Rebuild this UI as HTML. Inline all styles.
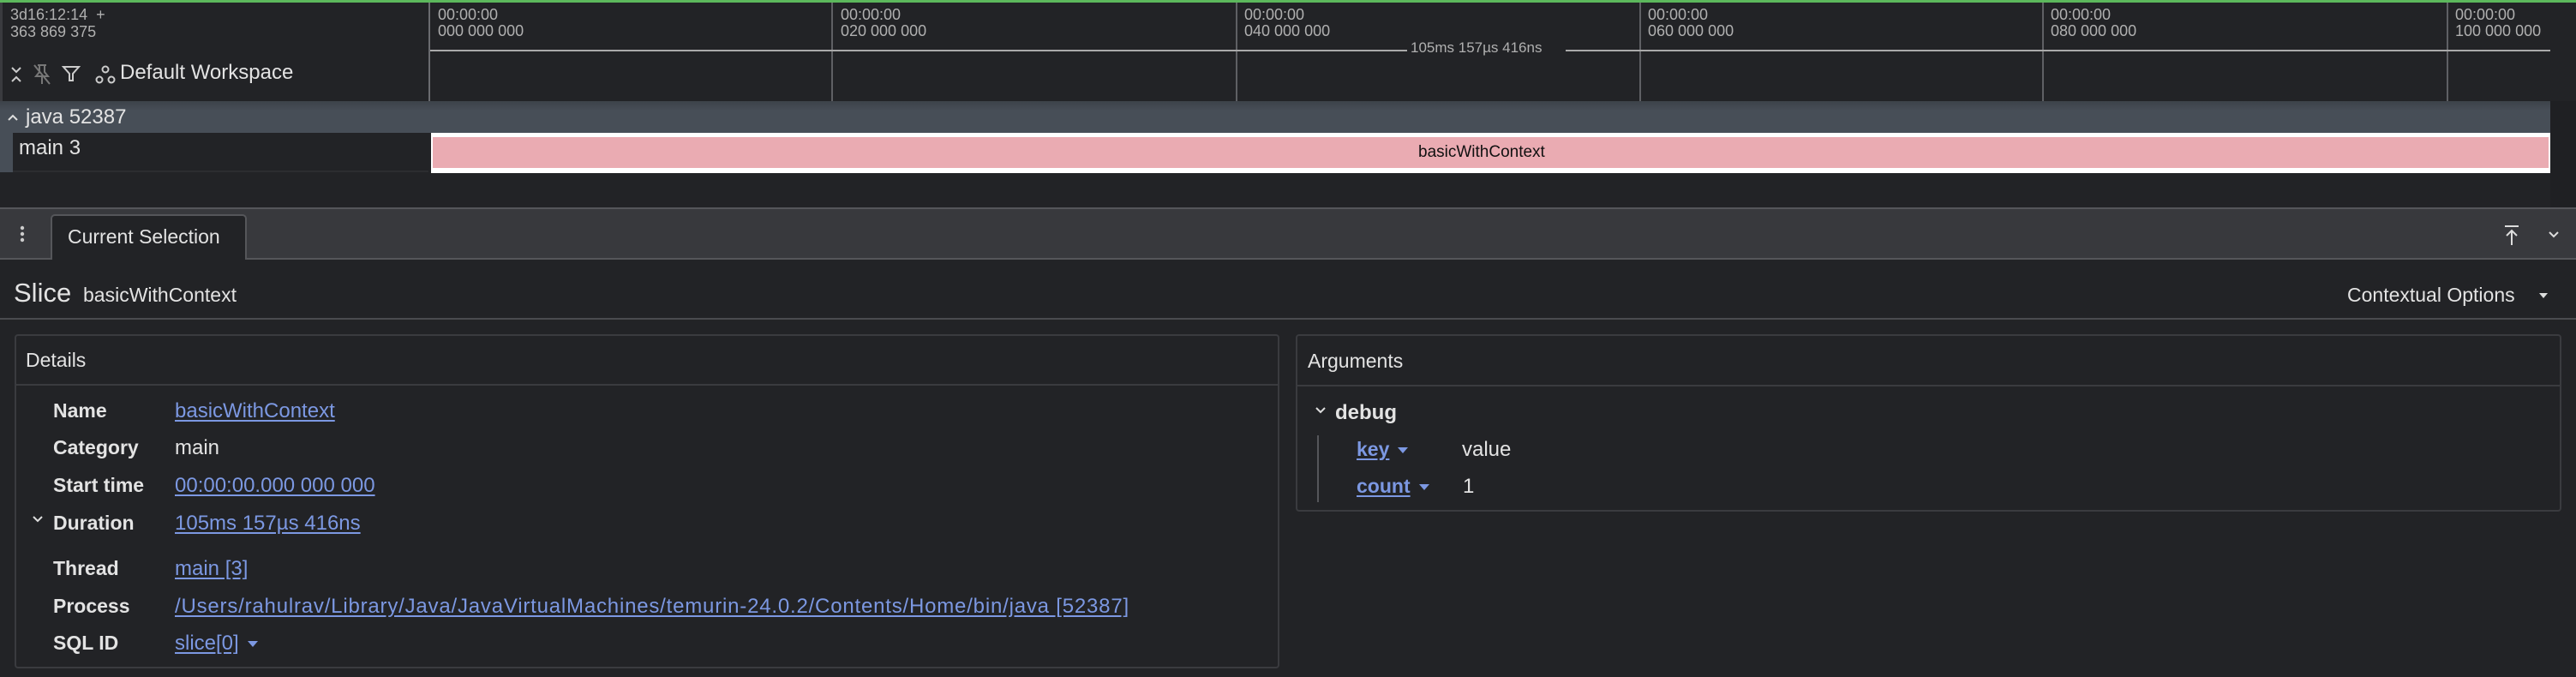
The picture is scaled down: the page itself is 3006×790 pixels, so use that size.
<!DOCTYPE html>
<html><head><meta charset="utf-8"><style>
*{margin:0;padding:0;box-sizing:border-box}
body{width:3006px;height:790px;background:#222326;overflow:hidden;position:relative;font-family:"Liberation Sans",sans-serif;color:#e3e3e3}
.a{position:absolute;white-space:nowrap}
.tk{position:absolute;top:3px;width:2px;height:115px;background:#5f6064}
.tl{position:absolute;font-size:18px;line-height:19px;color:#b0b0b0;top:8px}
.lbl{position:absolute;left:62px;font-weight:bold;font-size:23px;color:#e3e3e3}
.val{position:absolute;left:204px;font-size:24px}
.lk{color:#7c98e2;text-decoration:underline;text-underline-offset:3px}
.tri{display:inline-block;width:0;height:0;border-left:6px solid transparent;border-right:6px solid transparent;border-top:7px solid #7c98e2;vertical-align:middle;margin-left:10px}
</style></head><body>
<div class="a" style="left:0;top:0;width:3006px;height:3px;background:#5cb85c"></div>
<div class="a" style="left:0;top:3px;width:3px;height:115px;background:#3a3b3f"></div>
<div class="a" style="left:12px;top:7px;font-size:18px;line-height:20px;color:#b0b0b0">3d16:12:14 &nbsp;+<br>363 869 375</div>
<div class="a" style="left:500px;top:3px;width:2px;height:115px;background:#6a6b6f"></div>
<div class="tk" style="left:970px"></div><div class="tk" style="left:1442px"></div><div class="tk" style="left:1913px"></div><div class="tk" style="left:2383px"></div><div class="tk" style="left:2855px"></div>
<div class="tl" style="left:511px">00:00:00<br>000 000 000</div>
<div class="tl" style="left:981px">00:00:00<br>020 000 000</div>
<div class="tl" style="left:1452px">00:00:00<br>040 000 000</div>
<div class="tl" style="left:1923px">00:00:00<br>060 000 000</div>
<div class="tl" style="left:2393px">00:00:00<br>080 000 000</div>
<div class="tl" style="left:2865px">00:00:00<br>100 000 000</div>
<div class="a" style="left:502px;top:58px;width:1140px;height:2px;background:#aaa"></div>
<div class="a" style="left:1827px;top:58px;width:1149px;height:2px;background:#aaa"></div>
<div class="a" style="left:1646px;top:46px;font-size:17px;color:#b0b0b0">105ms 157µs 416ns</div>
<svg class="a" style="left:8px;top:74px" width="22" height="26" viewBox="0 0 22 26"><path d="M6 5l5 5 5-5M6 21l5-5 5 5" stroke="#ccc" stroke-width="2" fill="none"/></svg>
<svg class="a" style="left:36px;top:73px" width="26" height="28" viewBox="0 0 26 28"><path d="M8 3h10M10 3v8l-4 5h14l-4-5V3M13 16v9M4 3l18 22" stroke="#777" stroke-width="2" fill="none"/></svg>
<svg class="a" style="left:72px;top:75px" width="22" height="22" viewBox="0 0 22 22"><path d="M2 3h18l-7 8v8h-4v-8z" stroke="#ccc" stroke-width="2" fill="none"/></svg>
<svg class="a" style="left:110px;top:75px" width="26" height="24" viewBox="0 0 26 24"><circle cx="13" cy="6" r="3.5" stroke="#ccc" stroke-width="2" fill="none"/><circle cx="6" cy="18" r="3.5" stroke="#ccc" stroke-width="2" fill="none"/><circle cx="20" cy="18" r="3.5" stroke="#ccc" stroke-width="2" fill="none"/></svg>
<div class="a" style="left:140px;top:71px;font-size:24px;color:#e3e3e3">Default Workspace</div>
<div class="a" style="left:0;top:118px;width:2976px;height:37px;background:linear-gradient(#3d4249,#474e57 30%)"></div>
<div class="a" style="left:0;top:155px;width:15px;height:46px;background:#474e57"></div>
<div class="a" style="left:2976px;top:118px;width:30px;height:125px;background:#1f2023"></div>
<svg class="a" style="left:8px;top:131px" width="14" height="12" viewBox="0 0 14 12"><path d="M2 9l5-5 5 5" stroke="#ddd" stroke-width="2" fill="none"/></svg>
<div class="a" style="left:30px;top:123px;font-size:24px;color:#e3e3e3">java 52387</div>
<div class="a" style="left:15px;top:155px;width:485px;height:46px;background:#222326;border-bottom:2px solid #2c2d30"></div>
<div class="a" style="left:22px;top:159px;font-size:24px;color:#e3e3e3">main 3</div>
<div class="a" style="left:503px;top:155px;width:2473px;height:47px;background:#fff"></div>
<div class="a" style="left:505px;top:160px;width:2469px;height:36px;background:#eaabb2"></div>
<div class="a" style="left:1655px;top:167px;font-size:19px;color:#111">basicWithContext</div>
<div class="a" style="left:0;top:242px;width:3006px;height:2px;background:#55565a"></div>
<div class="a" style="left:0;top:244px;width:3006px;height:57px;background:#38393d"></div>
<div class="a" style="left:0;top:301px;width:3006px;height:2px;background:#55565a"></div>
<svg class="a" style="left:22px;top:262px" width="8" height="22" viewBox="0 0 8 22"><circle cx="4" cy="4" r="2.2" fill="#ccc"/><circle cx="4" cy="11" r="2.2" fill="#ccc"/><circle cx="4" cy="18" r="2.2" fill="#ccc"/></svg>
<div class="a" style="left:59px;top:250px;width:229px;height:53px;background:#222326;border:2px solid #55565a;border-bottom:none;border-radius:5px 5px 0 0"></div>
<div class="a" style="left:79px;top:263px;font-size:23px;color:#e3e3e3">Current Selection</div>
<svg class="a" style="left:2920px;top:262px" width="22" height="26" viewBox="0 0 22 26"><path d="M3 2h16M11 24V7M5 13l6-6 6 6" stroke="#ddd" stroke-width="2" fill="none"/></svg>
<svg class="a" style="left:2972px;top:268px" width="16" height="12" viewBox="0 0 16 12"><path d="M3 3l5 5 5-5" stroke="#ddd" stroke-width="2" fill="none"/></svg>
<div class="a" style="left:16px;top:324px;font-size:31px;color:#e3e3e3">Slice</div>
<div class="a" style="left:97px;top:331px;font-size:23px;color:#e3e3e3">basicWithContext</div>
<div class="a" style="left:2739px;top:331px;font-size:23px;color:#e3e3e3">Contextual Options</div>
<div class="a" style="left:2963px;top:342px;width:0;height:0;border-left:5px solid transparent;border-right:5px solid transparent;border-top:6px solid #ddd"></div>
<div class="a" style="left:0;top:371px;width:3006px;height:2px;background:#4a4b4f"></div>
<div class="a" style="left:17px;top:390px;width:1476px;height:390px;border:2px solid #3a3b3f;border-radius:4px"></div>
<div class="a" style="left:17px;top:448px;width:1476px;height:2px;background:#3a3b3f"></div>
<div class="a" style="left:30px;top:407px;font-size:23px;color:#e3e3e3">Details</div>
<div class="lbl" style="top:466px">Name</div><div class="val lk" style="top:466px">basicWithContext</div>
<div class="lbl" style="top:509px">Category</div><div class="val" style="top:509px;color:#e3e3e3">main</div>
<div class="lbl" style="top:553px">Start time</div><div class="val lk" style="top:553px">00:00:00.000 000 000</div>
<svg class="a" style="left:37px;top:601px" width="14" height="10" viewBox="0 0 14 10"><path d="M2 2l5 5 5-5" stroke="#ddd" stroke-width="2" fill="none"/></svg>
<div class="lbl" style="top:597px">Duration</div><div class="val lk" style="top:597px">105ms 157µs 416ns</div>
<div class="lbl" style="top:650px">Thread</div><div class="val lk" style="top:650px">main [3]</div>
<div class="lbl" style="top:694px">Process</div><div class="val lk" style="top:694px;letter-spacing:0.8px">/Users/rahulrav/Library/Java/JavaVirtualMachines/temurin-24.0.2/Contents/Home/bin/java [52387]</div>
<div class="lbl" style="top:737px">SQL ID</div><div class="val" style="top:737px"><span class="lk">slice[0]</span><span class="tri"></span></div>
<div class="a" style="left:1512px;top:390px;width:1477px;height:207px;border:2px solid #3a3b3f;border-radius:4px"></div>
<div class="a" style="left:1512px;top:449px;width:1477px;height:2px;background:#3a3b3f"></div>
<div class="a" style="left:1526px;top:408px;font-size:23px;color:#e3e3e3">Arguments</div>
<svg class="a" style="left:1534px;top:474px" width="14" height="10" viewBox="0 0 14 10"><path d="M2 2l5 5 5-5" stroke="#ddd" stroke-width="2" fill="none"/></svg>
<div class="a" style="left:1558px;top:468px;font-size:24px;font-weight:bold;color:#e3e3e3">debug</div>
<div class="a" style="left:1537px;top:508px;width:2px;height:78px;background:#55565a"></div>
<div class="a" style="left:1583px;top:511px;font-size:23px;font-weight:bold"><span class="lk">key</span><span class="tri"></span></div>
<div class="a" style="left:1706px;top:511px;font-size:24px;color:#e3e3e3">value</div>
<div class="a" style="left:1583px;top:554px;font-size:23px;font-weight:bold"><span class="lk">count</span><span class="tri"></span></div>
<div class="a" style="left:1707px;top:554px;font-size:24px;color:#e3e3e3">1</div>
</body></html>
